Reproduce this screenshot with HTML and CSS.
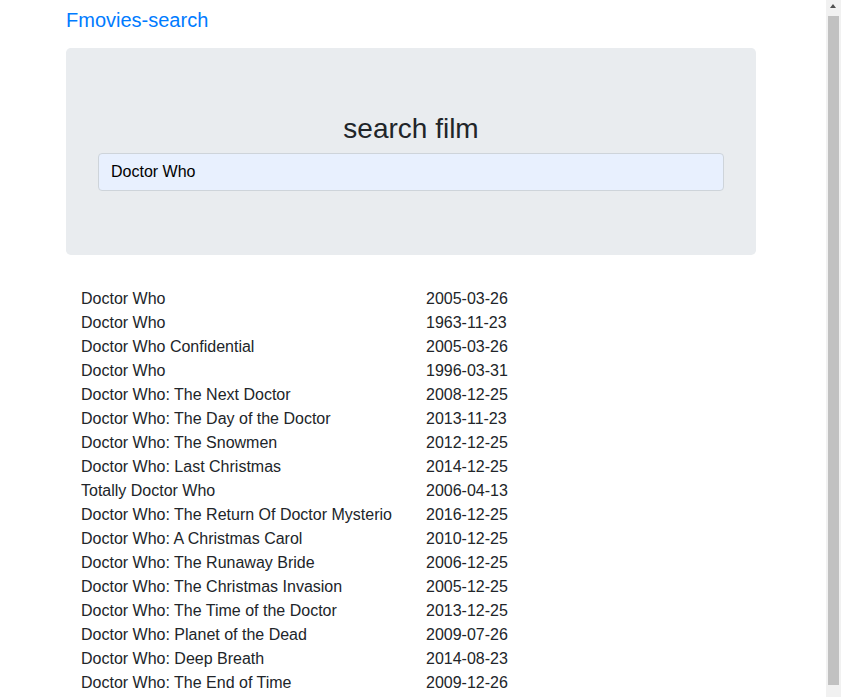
FILE: index.html
```html
<!DOCTYPE html>
<html lang="en">
<head>
<meta charset="utf-8">
<title>Fmovies-search</title>
<link rel="stylesheet" href="styles.css">
</head>
<body>
<div class="container">
  <header class="header">
    <a class="brand" href="#">Fmovies-search</a>
  </header>
  <section class="jumbotron">
    <h3 class="title">search film</h3>
    <input class="search-input" type="text" value="Doctor Who">
  </section>
  <div class="results">
    <div class="row"><span class="name">Doctor Who</span><span class="date">2005-03-26</span></div>
    <div class="row"><span class="name">Doctor Who</span><span class="date">1963-11-23</span></div>
    <div class="row"><span class="name">Doctor Who Confidential</span><span class="date">2005-03-26</span></div>
    <div class="row"><span class="name">Doctor Who</span><span class="date">1996-03-31</span></div>
    <div class="row"><span class="name">Doctor Who: The Next Doctor</span><span class="date">2008-12-25</span></div>
    <div class="row"><span class="name">Doctor Who: The Day of the Doctor</span><span class="date">2013-11-23</span></div>
    <div class="row"><span class="name">Doctor Who: The Snowmen</span><span class="date">2012-12-25</span></div>
    <div class="row"><span class="name">Doctor Who: Last Christmas</span><span class="date">2014-12-25</span></div>
    <div class="row"><span class="name">Totally Doctor Who</span><span class="date">2006-04-13</span></div>
    <div class="row"><span class="name">Doctor Who: The Return Of Doctor Mysterio</span><span class="date">2016-12-25</span></div>
    <div class="row"><span class="name">Doctor Who: A Christmas Carol</span><span class="date">2010-12-25</span></div>
    <div class="row"><span class="name">Doctor Who: The Runaway Bride</span><span class="date">2006-12-25</span></div>
    <div class="row"><span class="name">Doctor Who: The Christmas Invasion</span><span class="date">2005-12-25</span></div>
    <div class="row"><span class="name">Doctor Who: The Time of the Doctor</span><span class="date">2013-12-25</span></div>
    <div class="row"><span class="name">Doctor Who: Planet of the Dead</span><span class="date">2009-07-26</span></div>
    <div class="row"><span class="name">Doctor Who: Deep Breath</span><span class="date">2014-08-23</span></div>
    <div class="row"><span class="name">Doctor Who: The End of Time</span><span class="date">2009-12-26</span></div>
  </div>
</div>
<div class="scrollbar" aria-hidden="true">
  <span class="scroll-arrow"></span>
  <span class="scroll-thumb"></span>
</div>
</body>
</html>
```
FILE: styles.css
```css
html, body {
  margin: 0;
  padding: 0;
}
body {
  font-family: "Liberation Sans", Arial, Helvetica, sans-serif;
  font-size: 16px;
  line-height: 24px;
  color: #212529;
  background: #fff;
  padding-right: 15px;
}
.container {
  width: 690px;
  margin: 0 auto;
  padding-right: 4px;
}
.header {
  padding-top: 5px;
  margin-bottom: 13px;
}
.brand {
  display: block;
  font-size: 20px;
  line-height: 30px;
  color: #007bff;
  text-decoration: none;
}
.jumbotron {
  background: #e9ecef;
  border-radius: 4.8px;
  padding: 64px 32px;
  margin-bottom: 32px;
}
.title {
  margin: 0 0 8px;
  font-size: 28px;
  font-weight: 500;
  line-height: 33px;
  text-align: center;
  color: #212529;
}
.search-input {
  display: block;
  box-sizing: border-box;
  width: 100%;
  height: 38px;
  margin: 0;
  padding: 6px 12px;
  font-family: inherit;
  font-size: 16px;
  line-height: 24px;
  color: #000;
  background: #e8f0fe;
  border: 1px solid #ced4da;
  border-radius: 4px;
  outline: none;
}
.results {
  padding: 0 0 6px 15px;
}
.row {
  display: grid;
  grid-template-columns: 345px 345px;
  height: 24px;
}
.name, .date {
  white-space: nowrap;
}
.scrollbar {
  position: fixed;
  top: 0;
  right: 0;
  width: 15px;
  height: 100vh;
  background: #f1f1f1;
}
.scroll-arrow {
  position: absolute;
  top: 4px;
  left: 4px;
  width: 0;
  height: 0;
  border-left: 3.5px solid transparent;
  border-right: 3.5px solid transparent;
  border-bottom: 4px solid #505050;
}
.scroll-thumb {
  position: absolute;
  top: 16px;
  bottom: 12px;
  left: 2px;
  right: 2px;
  background: #c1c1c1;
}
```
